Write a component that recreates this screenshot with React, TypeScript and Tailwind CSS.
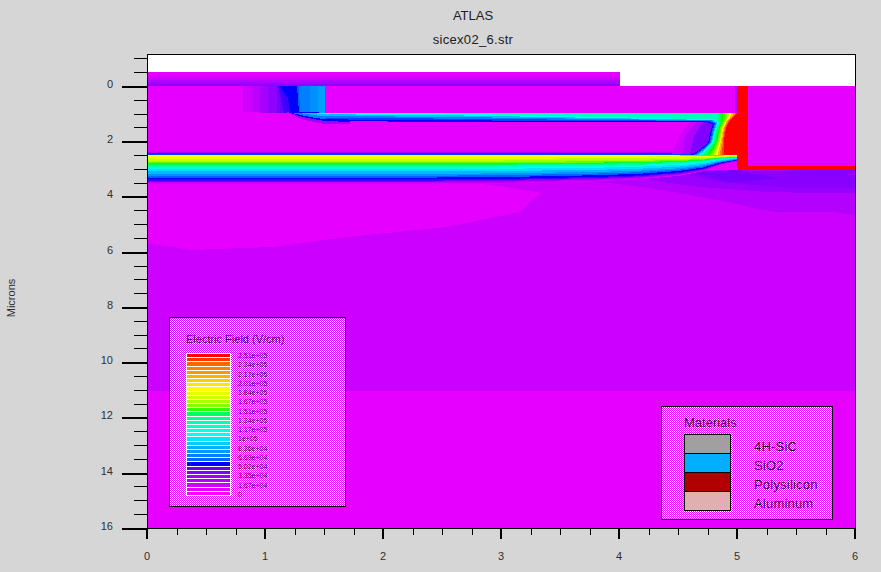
const hsl = (h: number) => `hsl(${h} 100% 50%)`;
const lerp = (a: number, b: number, t: number) => a + (b - a) * t;
const pts = (p: number[][]) => p.map((q) => q.join(",")).join(" ");

// y = 86 + 27.6 per micron, x = 147 + 118 per micron
const yMajor = [0, 2, 4, 6, 8, 10, 12, 14, 16];
const xMajor = [0, 1, 2, 3, 4, 5, 6];
const yMinor = [-1, -0.5, 0.5, 1, 1.5, 2.5, 3, 3.5, 4.5, 5, 5.5, 6.5, 7, 7.5, 8.5, 9, 9.5, 10.5, 11, 11.5, 12.5, 13, 13.5, 14.5, 15, 15.5];
const yAt = (v: number) => Math.round(86 + v * 27.62);
const xAt = (v: number) => Math.round(147 + v * 118);
const xMinor = Array.from({ length: 25 }, (_, i) => i * 0.25).filter((v) => v % 1 !== 0);

const topRows: [number, number, string][] = [
  [72, 4, "#e600ff"], [76, 2, "#d800ff"], [78, 2, "#cc00ff"], [80, 2, "#b800ff"], [82, 2, "#a800ff"], [84, 2, "#9400ff"],
];

// lower edge of the main channel band
const lowerEdge = [[147, 178.5], [430, 178.5], [500, 178], [550, 177], [600, 176], [640, 174.5], [680, 171.5], [703, 168], [720, 163], [737, 160]];
const bandStops: [number, string][] = [
  [1.25, "#d800ff"], [1.21, "#c000ff"], [1.17, "#a000ff"], [1.13, "#8000ff"], [1.09, "#4000ff"], [1.04, "#0000ff"],
  [0.96, "#0060ff"], [0.88, "#0090ff"], [0.8, "#00b8ff"], [0.7, "#00e0ff"], [0.6, "#00ffe0"], [0.5, "#00ffa0"],
  [0.42, "#00ff40"], [0.36, "#60ff00"], [0.3, "#a0ff00"], [0.24, "#c8ff00"], [0.16, "#e8ff00"], [0.08, "#ffff00"],
];
const bandPoly = (t: number) => pts([[147, 155], [737, 155], ...lowerEdge.slice().reverse().map(([x, y]) => [x, 155 + (y - 155) * t])]);

// contours wrapping the red blob, blue (t=0) to red (t=1)
const blobHues = Array.from({ length: 17 }, (_, i) => 240 - i * 15);
const blobPoly = (h: number) => {
  const t = (240 - h) / 240;
  const yTop = Math.max(113, 121.5 - t * 27);
  const reachesTop = yTop === 113;
  const xTop = lerp(706, 737, t);
  return pts([
    [reachesTop ? xTop : 325, 113], [737, 113], [737, 155],
    [lerp(690, 724, t), 155],
    [lerp(698, 724, t), lerp(151, 148, t)],
    [lerp(708, 724, t), lerp(143, 140, t)],
    [lerp(711, 726, t), lerp(130, 128, t)],
    [lerp(713, 730, t), lerp(124, 120, t)],
    [xTop, Math.max(yTop, lerp(122, 114, t))],
    ...(reachesTop ? [] : [[450, yTop + 0.5], [325, yTop - 0.5]]),
  ]);
};

const fans: [string, number[][]][] = [
  ["#d000ff", [[672, 154], [680, 135], [690, 122], [737, 122], [737, 155]]],
  ["#b000ff", [[682, 154], [686, 135], [696, 122], [737, 122], [737, 155]]],
  ["#8000ff", [[690, 154], [694, 136], [703, 122], [737, 122], [737, 155]]],
];

const strips: [string, number[][]][] = [
  ["#d000ff", [[243, 86], [325, 86], [325, 113], [243, 112]]],
  ["#c000ff", [[252, 86], [325, 86], [325, 113], [252, 112]]],
  ["#a800ff", [[260, 86], [325, 86], [325, 113], [260, 113]]],
  ["#9000ff", [[268, 86], [325, 86], [325, 114], [268, 113]]],
  ["#7000ff", [[277, 86], [325, 86], [325, 114], [277, 113]]],
  ["#4000ff", [[278, 86], [325, 86], [325, 114], [284, 113]]],
  ["#0000ff", [[280, 86], [325, 86], [325, 114], [290, 113], [288, 98]]],
  ["#0060ff", [[297, 86], [325, 86], [325, 113], [299, 113]]],
  ["#0080ff", [[299, 86], [325, 86], [325, 113], [300, 113]]],
  ["#0090ff", [[310, 86], [325, 86], [325, 113], [310, 113]]],
  ["#00a0ff", [[318, 86], [325, 86], [325, 113], [318, 113]]],
];

const wedges: [string, number[][]][] = [
  ["#a000ff", [[286, 112], [304, 120], [325, 124], [350, 124], [350, 113]]],
  ["#0000ff", [[287, 112], [302, 117], [325, 121], [350, 122], [350, 113]]],
  ["#0080ff", [[292, 113], [310, 117], [330, 120], [350, 120], [350, 113]]],
  ["#00c0ff", [[300, 113], [320, 116], [350, 118], [350, 113]]],
  ["#00ffff", [[312, 113], [330, 115], [350, 115], [350, 113]]],
];

const barRows = [
  "bg-[#ff0000]", "bg-[#ff3300]", "bg-[#ff6600]", "bg-[#ff8000]", "bg-[#ff9900]", "bg-[#ffb300]", "bg-[#ffcc00]", "bg-[#ffe600]", "bg-[#ffff00]",
  "bg-[#e6ff00]", "bg-[#ccff00]", "bg-[#aaff00]", "bg-[#80ff00]", "bg-[#33ff00]", "bg-[#00ff66]", "bg-[#00ff99]", "bg-[#00ffb3]", "bg-[#00ffcc]",
  "bg-[#00ffe6]", "bg-[#00ffff]", "bg-[#00e6ff]", "bg-[#00ccff]", "bg-[#00b3ff]", "bg-[#0099ff]", "bg-[#0080ff]", "bg-[#0066ff]", "bg-[#0000ff]",
  "bg-[#6600ff]", "bg-[#8000ff]", "bg-[#9900ff]", "bg-[#b300ff]", "bg-[#cc00ff]", "bg-[#e600ff]", "bg-[#ff00ff]",
];
const fieldLabels = ["2.51e+05", "2.34e+05", "2.17e+05", "2.01e+05", "1.84e+05", "1.67e+05", "1.51e+05", "1.34e+05", "1.17e+05", "1e+05", "8.36e+04", "6.69e+04", "5.02e+04", "3.35e+04", "1.67e+04", "0"];

const materials = [
  { name: "4H-SiC", swatch: "bg-[#a0a0a0]" },
  { name: "SiO2", swatch: "bg-[#00b0ff]" },
  { name: "Polysilicon", swatch: "bg-[#b00000]" },
  { name: "Aluminum", swatch: "bg-[#e0b0b0]" },
];

// 1px white checker, the plot shows through the other half
function Stipple({ id, shift }: { id: string; shift: number }) {
  return (
    <svg className="absolute inset-0 w-full h-full" shapeRendering="crispEdges">
      <defs>
        <pattern id={id} x={shift} width={2} height={2} patternUnits="userSpaceOnUse">
          <rect width={1} height={1} fill="#fff" />
          <rect x={1} y={1} width={1} height={1} fill="#fff" />
        </pattern>
      </defs>
      <rect width="100%" height="100%" fill={`url(#${id})`} />
    </svg>
  );
}

function Plot() {
  return (
    <svg width={881} height={518} viewBox="0 54 881 518" shapeRendering="crispEdges" className="block">
      <rect x={147} y={55} width={708} height={31} fill="#fff" />
      {topRows.map(([y, h, c]) => <rect key={y} x={147} y={y} width={473} height={h} fill={c} />)}
      <rect x={147} y={86} width={708} height={442} fill="#e600ff" />
      <rect x={147} y={170} width={708} height={221} fill="#cc00ff" />
      <polygon fill="#e600ff" points="147,170 447,170 447,180 507,187 542,193 530,202 520,212 447,227 347,237 273,247 190,250 147,243" />
      <polygon fill="#b400ff" points="560,170 600,182 650,188 733,203 753,208 777,212 833,212 855,215 855,170" />
      <polygon fill="#9a00ff" points="600,172 633,178 700,187 767,192 817,193 855,193 855,170" />
      <polygon fill="#8a00ff" points="680,172 720,182 790,188 855,188 855,170" />
      <polygon fill="#7800ff" points="690,172 733,183 778,178 750,173 740,170" />

      {/* channel band */}
      {bandStops.map(([t, c]) => <polygon key={c} fill={c} points={bandPoly(t)} />)}
      <rect x={147} y={151} width={590} height={1} fill="#d800ff" />
      <rect x={147} y={152} width={590} height={1} fill="#b000ff" />
      <rect x={147} y={153} width={590} height={1} fill="#6000ff" />
      <rect x={147} y={154} width={590} height={1} fill="#0040ff" />

      {/* gate corner */}
      {strips.map(([c, p]) => <polygon key={c} fill={c} points={pts(p)} />)}
      {wedges.map(([c, p]) => <polygon key={c} fill={c} points={pts(p)} />)}
      {fans.map(([c, p]) => <polygon key={c} fill={c} points={pts(p)} />)}
      {blobHues.map((h) => <polygon key={h} fill={hsl(h)} points={blobPoly(h)} />)}
      <rect x={680} y={155} width={44} height={1} fill="#ffa000" />
      <rect x={735} y={86} width={2} height={27} fill="#b000ff" />

      {/* oxide */}
      <rect x={737} y={86} width={11} height={84} fill="#f00" />
      <rect x={748} y={166} width={107} height={4} fill="#f00" />

      <rect x={147} y={54.5} width={708} height={474} fill="none" stroke="#000" />

      {yMinor.map((v) => <line key={v} x1={134} x2={147} y1={yAt(v) + 0.5} y2={yAt(v) + 0.5} stroke="#000" />)}
      {yMajor.map((v) => <rect key={v} x={122} y={yAt(v)} width={25} height={2} fill="#000" />)}
      {xMinor.map((v) => <line key={v} x1={xAt(v) + 0.5} x2={xAt(v) + 0.5} y1={528} y2={535} stroke="#000" />)}
      {xMajor.map((v) => <rect key={v} x={xAt(v) - 1} y={528} width={2} height={11} fill="#000" />)}

      <g fontSize={11} fill="#303030" shapeRendering="auto">
        {yMajor.map((v) => <text key={v} x={113} y={yAt(v) + 2} textAnchor="end">{v}</text>)}
        {xMajor.map((v) => <text key={v} x={xAt(v)} y={560} textAnchor="middle">{v}</text>)}
        <text transform="translate(15 298) rotate(-90)" textAnchor="middle">Microns</text>
      </g>
    </svg>
  );
}

export default function App() {
  return (
    <div className="w-[881px] h-[572px] overflow-hidden bg-[#d6d6d6] font-['Liberation_Sans',Arial,sans-serif] text-[#202020]">
      <header className="h-[54px] pl-[65px] flex flex-col items-center text-[13px] leading-[14px]">
        <div className="mt-[9px]">ATLAS</div>
        <div className="mt-[10px] tracking-[0.3px]">sicex02_6.str</div>
      </header>
      <div className="relative">
        <Plot />

        {/* field legend */}
        <div className="absolute left-[169px] top-[263px] w-[177px] h-[190px] border border-black pl-[16px] pt-[15px]">
          <Stipple id="field-stipple" shift={1} />
          <div className="relative text-[11px] leading-[12px] text-[#111]">Electric Field (V/cm)</div>
          <div className="relative mt-[8px] flex gap-[7px]">
            <div className="w-[45px] h-[143px] bg-white p-px flex flex-col gap-px">
              {barRows.map((c) => <div key={c} className={`flex-1 ${c}`} />)}
            </div>
            <div className="flex flex-col justify-between h-[147px] -mt-[1px] text-[7px] leading-[8px] text-[#111]">
              {fieldLabels.map((l) => <div key={l}>{l}</div>)}
            </div>
          </div>
        </div>

        {/* materials legend */}
        <div className="absolute left-[661px] top-[352px] w-[172px] h-[114px] border border-black pl-[22px] pt-[9px]">
          <Stipple id="materials-stipple" shift={0} />
          <div className="relative text-[13px] leading-[14px] text-[#111]">Materials</div>
          <div className="relative mt-[4px] flex flex-col">
            {materials.map((m) => (
              <div key={m.name} className="flex items-center h-[19px] text-[13px] leading-[14px] text-[#111]">
                <div className={`w-[47px] h-[20px] border border-black ${m.swatch}`} />
                <span className="ml-[23px] pt-[6px] tracking-[0.2px]">{m.name}</span>
              </div>
            ))}
          </div>
        </div>
      </div>
    </div>
  );
}
